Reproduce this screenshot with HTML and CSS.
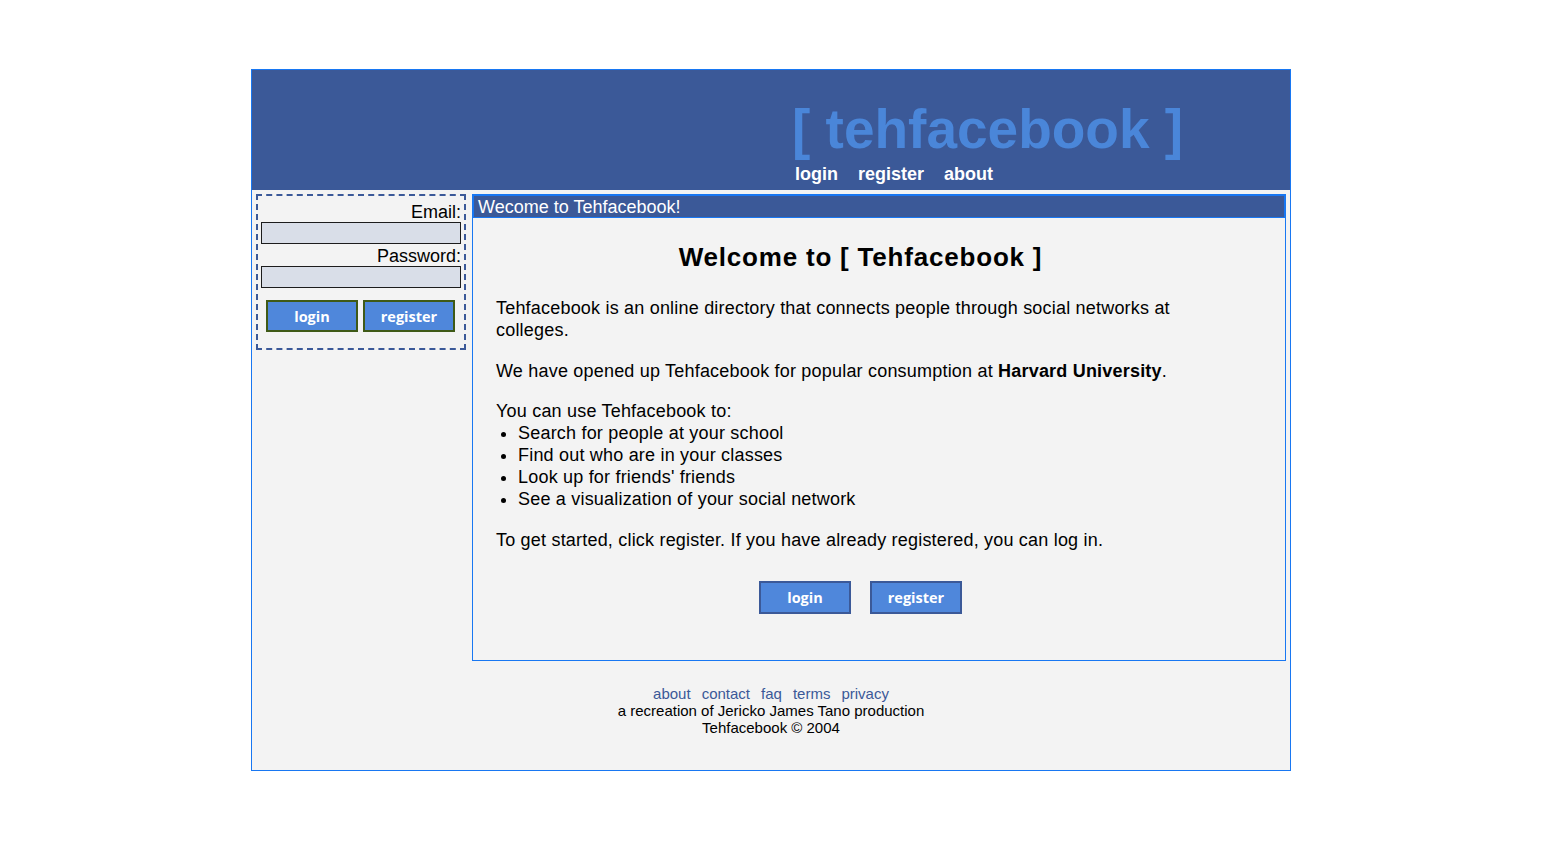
FILE: index.html
```html
<!DOCTYPE html>
<html lang="en">
<head>
<meta charset="utf-8">
<title>tehfacebook</title>
<link rel="stylesheet" href="styles.css">
</head>
<body>
<div class="page">
  <header class="header">
    <div class="logo">[ tehfacebook ]</div>
    <nav class="topnav">
      <a href="#">login</a>
      <a href="#">register</a>
      <a href="#">about</a>
    </nav>
  </header>
  <div class="main-row">
    <aside class="sidebar">
      <form class="login-box">
        <label class="field-label" for="email">Email:</label>
        <input class="field" id="email" type="text">
        <label class="field-label" for="pass">Password:</label>
        <input class="field" id="pass" type="password">
        <div class="side-buttons">
          <button type="button" class="btn btn-side">login</button>
          <button type="button" class="btn btn-side">register</button>
        </div>
      </form>
    </aside>
    <section class="panel">
      <div class="panel-title">Wecome to Tehfacebook!</div>
      <div class="panel-body">
        <h1 class="welcome">Welcome to [ Tehfacebook ]</h1>
        <p>Tehfacebook is an online directory that connects people through social networks at colleges.</p>
        <p>We have opened up Tehfacebook for popular consumption at <b>Harvard University</b>.</p>
        <p class="tight">You can use Tehfacebook to:</p>
        <ul class="features">
          <li>Search for people at your school</li>
          <li>Find out who are in your classes</li>
          <li>Look up for friends' friends</li>
          <li>See a visualization of your social network</li>
        </ul>
        <p>To get started, click register. If you have already registered, you can log in.</p>
        <div class="main-buttons">
          <button type="button" class="btn btn-main">login</button>
          <button type="button" class="btn btn-main">register</button>
        </div>
      </div>
    </section>
  </div>
  <footer class="footer">
    <div class="footer-links">
      <a href="#">about</a>
      <a href="#">contact</a>
      <a href="#">faq</a>
      <a href="#">terms</a>
      <a href="#">privacy</a>
    </div>
    <div>a recreation of Jericko James Tano production</div>
    <div>Tehfacebook &copy; 2004</div>
  </footer>
</div>
</body>
</html>
```

FILE: styles.css
```css
html, body {
  background: #ffffff;
}
body {
  margin: 8px;
  font-family: "Liberation Sans", Arial, sans-serif;
  color: #000;
}
.page {
  width: 1038px;
  margin: 61px 0 0 243px;
  border: 1px solid #1877f2;
  background: #f3f3f3;
}
.header {
  height: 120px;
  box-sizing: border-box;
  background: #3b5998;
  padding: 27px 0 0 540px;
}
.logo {
  font-family: "Liberation Sans", Arial, sans-serif;
  font-weight: bold;
  font-size: 55px;
  color: #4a86d9;
  white-space: nowrap;
}
.topnav {
  display: flex;
  gap: 20px;
  margin: 3px 0 0 3px;
}
.topnav a {
  color: #ffffff;
  font-weight: bold;
  font-size: 18px;
  text-decoration: none;
}
.main-row {
  display: flex;
  align-items: flex-start;
  padding: 4px 4px 0 4px;
}
.sidebar {
  width: 210px;
  flex: none;
}
.login-box {
  margin: 0;
  border: 2px dashed #3b5998;
  padding: 4px 3px 16px 2px;
  display: flex;
  flex-direction: column;
  align-items: flex-end;
}
.field-label {
  font-size: 18px;
  line-height: 18px;
  padding-top: 3px;
}
.field {
  width: 200px;
  height: 22px;
  box-sizing: border-box;
  margin: 1px 0 0 0;
  border: 1px solid #1c1c1c;
  background: #d9dee8;
  padding: 0 2px;
}
.side-buttons {
  align-self: stretch;
  display: flex;
  justify-content: center;
  gap: 5px;
  margin-top: 12px;
}
.btn {
  width: 92px;
  height: 32px;
  box-sizing: border-box;
  padding: 0;
  background: #4f87db;
  color: #ffffff;
  font-family: "Open Sans", "Liberation Sans", sans-serif;
  font-weight: bold;
  font-size: 14.5px;
  letter-spacing: 0;
  cursor: pointer;
}
.btn-side {
  border: 2px solid #3f5a17;
}
.btn-main {
  height: 33px;
  border: 2px solid #3b5998;
}
.panel {
  width: 814px;
  flex: none;
  margin-left: 6px;
  box-sizing: border-box;
  border: 1px solid #1877f2;
}
.panel-title {
  background: #3b5998;
  border: 1px solid #1877f2;
  color: #ffffff;
  font-size: 18px;
  line-height: 20px;
  padding: 1px 4px 0;
}
.panel-body {
  padding: 0 60px 46px 23px;
  font-size: 18px;
  letter-spacing: 0.2px;
  line-height: 22px;
}
.welcome {
  margin: 23px 0 24px;
  text-align: center;
  font-size: 26px;
  letter-spacing: 0.8px;
  line-height: 32px;
  font-weight: bold;
}
.panel-body p {
  margin: 18.5px 0;
}
.panel-body p.tight {
  margin-bottom: 0;
}
.features {
  margin: 0;
  padding-left: 22px;
}
.main-buttons {
  display: flex;
  justify-content: center;
  gap: 19px;
  margin-top: 30px;
}
.footer {
  margin-top: 24px;
  padding-bottom: 34px;
  text-align: center;
  font-size: 15px;
  line-height: 17px;
}
.footer-links {
  display: flex;
  justify-content: center;
  gap: 11px;
}
.footer-links a {
  color: #3b5998;
  text-decoration: none;
}
```
